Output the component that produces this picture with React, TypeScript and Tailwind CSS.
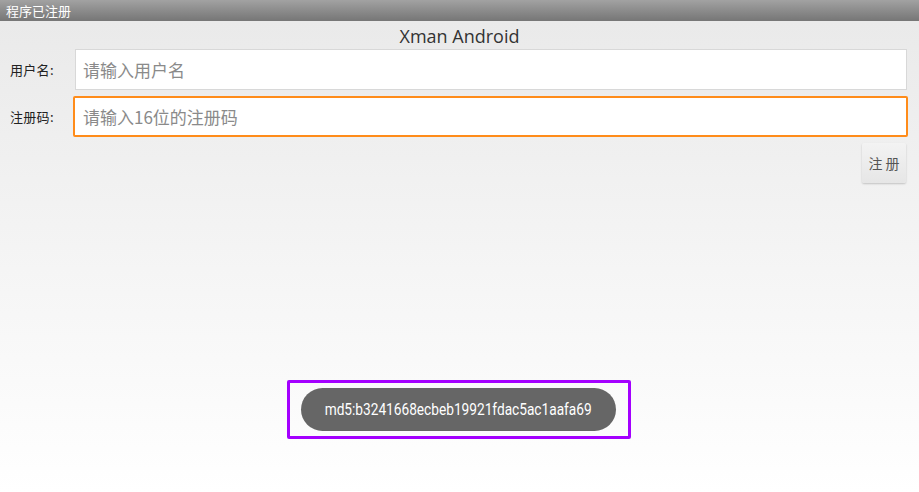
import React from "react";

const cjk = { fontFamily: '"Noto Sans CJK SC", "Noto Sans", sans-serif' };

export default function App() {
  return (
    <div className="w-[919px] h-[492px] flex flex-col bg-gradient-to-b from-[#e9e9e9] to-[#ffffff] overflow-hidden" style={cjk}>
      <div className="h-[21px] shrink-0 bg-gradient-to-b from-[#a2a2a2] to-[#767676] flex items-center pl-[6px] text-white text-[13px] leading-none">
        程序已注册
      </div>
      <div className="h-[28px] shrink-0 flex items-center justify-center text-[18px] text-[#333] leading-none pt-[2px]" style={{ fontFamily: '"Open Sans", "Noto Sans", sans-serif' }}>
        Xman Android
      </div>
      <div className="flex items-center h-[41px] shrink-0">
        <div className="w-[75px] pl-[10px] text-[13px] text-[#222] tracking-[0.3px]">用户名:</div>
        <div className="w-[832px] h-[41px] bg-white border border-[#d8d8d8] flex items-center pl-[7px] text-[17px] text-[#8a8a8a]">
          请输入用户名
        </div>
      </div>
      <div className="flex items-center h-[41px] mt-[6px] shrink-0">
        <div className="w-[73px] pl-[10px] text-[13px] text-[#222] tracking-[0.3px]">注册码:</div>
        <div className="w-[835px] h-[41px] bg-white border-2 border-[#ff8c1a] rounded-[2px] flex items-center pl-[8px] text-[17px] text-[#8a8a8a]">
          请输入16位的注册码
        </div>
      </div>
      <div className="flex justify-end pr-[13px] mt-[6px] shrink-0">
        <div className="w-[44px] h-[40px] bg-gradient-to-b from-[#f3f3f3] to-[#e6e6e6] rounded-[2px] shadow-[0_1px_2px_rgba(0,0,0,0.2)] flex items-center justify-center text-[14px] text-[#555] tracking-[3px] pl-[3px]">
          注册
        </div>
      </div>
      <div className="flex justify-center mt-[197px]">
        <div className="ml-[-2px] w-[344px] h-[59px] border-[3px] border-[#a400ff] rounded-[2px] flex items-center justify-center">
          <div className="w-[315px] h-[43px] rounded-full bg-[#666666] flex items-center justify-center text-white overflow-hidden">
            <span className="inline-block text-[16px] scale-x-[0.855] whitespace-nowrap" style={{ fontFamily: 'Roboto, "Noto Sans", sans-serif' }}>
              md5:b3241668ecbeb19921fdac5ac1aafa69
            </span>
          </div>
        </div>
      </div>
    </div>
  );
}
